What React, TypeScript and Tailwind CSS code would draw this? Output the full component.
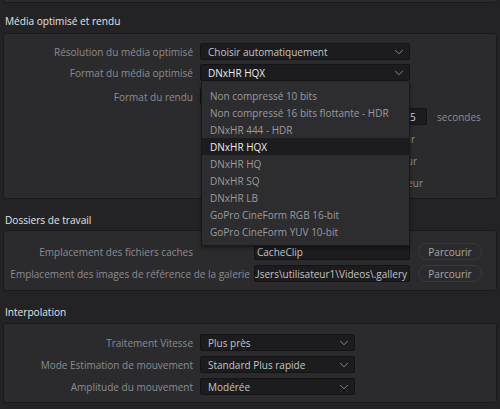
import { ChevronDown } from "lucide-react";

const font = { fontFamily: '"Open Sans", "Noto Sans", sans-serif' };

function Select({ value, width, bright }: { value: string; width: string; bright?: boolean }) {
  return (
    <div
      className={`flex h-[17px] shrink-0 items-center justify-between rounded-[2px] border border-[#141416] bg-[#1c1c1e] pl-[7px] pr-[3px] ${width}`}
    >
      <span className={`text-[10px] leading-none ${bright ? "text-[#ededed]" : "text-[#c4c4c4]"}`}>{value}</span>
      <ChevronDown size={14} strokeWidth={1.5} className="text-[#9a9a9a]" />
    </div>
  );
}

function Label({ children, width = "w-[189px]" }: { children: React.ReactNode; width?: string }) {
  return (
    <div className={`shrink-0 whitespace-nowrap text-right text-[10px] leading-none text-[#8c8c8f] ${width}`}>
      {children}
    </div>
  );
}

function Heading({ children, className = "h-[31px] pt-[16px]" }: { children: React.ReactNode; className?: string }) {
  return <div className={`px-[5px] text-[10.1px] leading-[11px] text-[#e4e4e4] ${className}`}>{children}</div>;
}

function Panel({ children, className = "" }: { children: React.ReactNode; className?: string }) {
  return (
    <div className={`mx-[3px] rounded-[3px] border border-[#1a1a1c] bg-[#2b2b2e] ${className}`}>{children}</div>
  );
}

function Browse() {
  return (
    <div className="flex h-[17px] w-[64px] shrink-0 items-center justify-center rounded-full border border-[#3a3a3e] text-[10px] leading-none text-[#a8a8aa]">
      Parcourir
    </div>
  );
}

// text of a checkbox row partly hidden under the open list
function Hidden({ children, className = "" }: { children: React.ReactNode; className?: string }) {
  return (
    <div
      className={`ml-[196px] flex h-[17px] items-center justify-end overflow-hidden whitespace-nowrap text-[10px] leading-none text-[#8c8c8f] ${className}`}
    >
      {children}
    </div>
  );
}

const formats = [
  "Non compressé 10 bits",
  "Non compressé 16 bits flottante - HDR",
  "DNxHR 444 - HDR",
  "DNxHR HQX",
  "DNxHR HQ",
  "DNxHR SQ",
  "DNxHR LB",
  "GoPro CineForm RGB 16-bit",
  "GoPro CineForm YUV 10-bit",
];

export default function App() {
  return (
    <div className="relative h-[409px] w-[500px] overflow-hidden bg-[#232326]" style={font}>
      {/* bottom edge of the previous panel */}
      <div className="mx-[3px] -mt-[4px] h-[7px] rounded-b-[3px] border border-[#1a1a1c] bg-[#2b2b2e]" />

      <Heading className="h-[30px] pt-[13px]">Média optimisé et rendu</Heading>
      <Panel className="h-[166px] pt-[9px]">
        <div className="flex items-center gap-[7px]">
          <Label>Résolution du média optimisé</Label>
          <Select value="Choisir automatiquement" width="w-[210px]" />
        </div>
        <div className="mt-[4px] flex items-center gap-[7px]">
          <Label>Format du média optimisé</Label>
          <Select value="DNxHR HQX" width="w-[210px]" bright />
        </div>
        <div className="mt-[7px] flex items-center gap-[7px]">
          <Label>Format du rendu</Label>
          <Select value="DNxHR HQX" width="w-[210px]" />
        </div>
        <div className="mt-[3px] flex h-[17px] items-center">
          <div className="ml-[396px] flex h-[17px] w-[27px] items-center rounded-[2px] border border-[#141416] bg-[#1c1c1e] pl-[9px] text-[10px] leading-none text-[#d8d8d8]">
            5
          </div>
          <span className="ml-[10px] text-[10px] leading-none text-[#8c8c8f]">secondes</span>
        </div>
        <Hidden className="mt-[5px] w-[215px]">Activer le rendu en arrière-plan pour</Hidden>
        <Hidden className="mt-[5px] w-[217px]">Rendu en cache du compositeur</Hidden>
        <Hidden className="mt-[5px] w-[223px]">Mise en cache de l'afficheur</Hidden>
      </Panel>

      <Heading>Dossiers de travail</Heading>
      <Panel className="h-[61px] pt-[12px]">
        <div className="flex items-center">
          <Label>Emplacement des fichiers caches</Label>
          <div className="ml-[61px] flex h-[17px] w-[156px] shrink-0 items-center rounded-[2px] border border-[#141416] bg-[#1c1c1e] px-[2px] text-[10px] leading-none text-[#c4c4c4]">
            CacheClip
          </div>
          <div className="ml-[8px]">
            <Browse />
          </div>
        </div>
        <div className="mt-[5px] flex items-center">
          <Label width="w-[246px]">Emplacement des images de référence de la galerie</Label>
          <div className="ml-[4px] flex h-[17px] w-[156px] shrink-0 items-center justify-end overflow-hidden whitespace-nowrap rounded-[2px] border border-[#141416] bg-[#1c1c1e] px-[2px] text-[10px] leading-none text-[#c4c4c4]">
            C:\Users\utilisateur1\Videos\.gallery
          </div>
          <div className="ml-[8px]">
            <Browse />
          </div>
        </div>
      </Panel>

      <Heading className="h-[32px] pt-[16px]">Interpolation</Heading>
      <Panel className="h-[80px] pt-[10px]">
        <div className="flex flex-col gap-[5px]">
          <div className="flex items-center gap-[7px]">
            <Label>Traitement Vitesse</Label>
            <Select value="Plus près" width="w-[155px]" />
          </div>
          <div className="flex items-center gap-[7px]">
            <Label>Mode Estimation de mouvement</Label>
            <Select value="Standard Plus rapide" width="w-[155px]" />
          </div>
          <div className="flex items-center gap-[7px]">
            <Label>Amplitude du mouvement</Label>
            <Select value="Modérée" width="w-[155px]" />
          </div>
        </div>
      </Panel>

      {/* open dropdown list */}
      <div className="absolute left-[201px] top-[82px] w-[209px] border-x border-b border-[#19191b] bg-[#2d2d30] pb-[4px] pt-[5px] shadow-[0_2px_4px_rgba(0,0,0,0.4)]">
        {formats.map((f) => (
          <div
            key={f}
            className={`flex h-[17.1px] items-center pl-[8px] text-[10px] leading-none ${
              f === "DNxHR HQX" ? "bg-[#1c1c1e] text-[#ededed]" : "text-[#9b9b9e]"
            }`}
          >
            {f}
          </div>
        ))}
      </div>
    </div>
  );
}
